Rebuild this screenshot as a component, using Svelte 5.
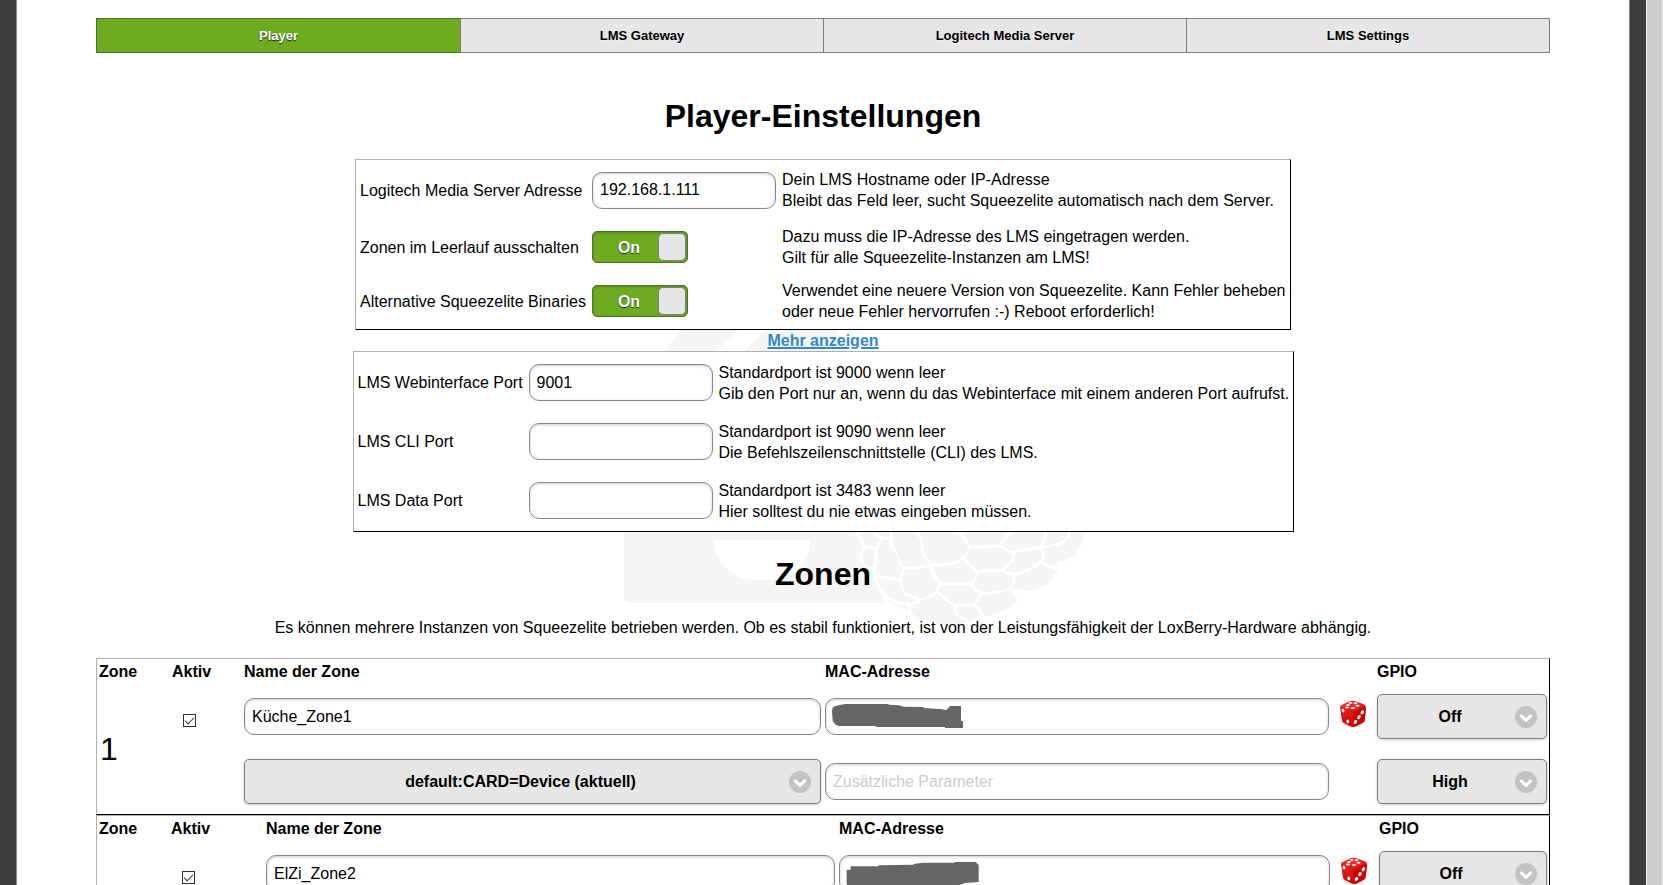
<script lang="ts">
	const tabs = ['Player', 'LMS Gateway', 'Logitech Media Server', 'LMS Settings'];
	let activeTab = $state('Player');

	let serverAddress = $state('192.168.1.111');
	let switchOffIdle = $state(true);
	let altBinaries = $state(true);

	let ports = $state([
		{
			id: 'web_port',
			label: 'LMS Webinterface Port',
			value: '9001',
			hint: ['Standardport ist 9000 wenn leer', 'Gib den Port nur an, wenn du das Webinterface mit einem anderen Port aufrufst.']
		},
		{
			id: 'cli_port',
			label: 'LMS CLI Port',
			value: '',
			hint: ['Standardport ist 9090 wenn leer', 'Die Befehlszeilenschnittstelle (CLI) des LMS.']
		},
		{
			id: 'data_port',
			label: 'LMS Data Port',
			value: '',
			hint: ['Standardport ist 3483 wenn leer', 'Hier solltest du nie etwas eingeben müssen.']
		}
	]);

	// cols: relative widths of the six table columns
	let zones = $state([
		{
			nr: 1,
			active: true,
			name: 'Küche_Zone1',
			cols: [73, 72, 581, 508, 44, 170],
			mask: '21,38 23,30 30,24 42,22 60,18 190,18 192,20 222,22 235,26 295,27 297,30 345,33 365,36 375,24 408,24 408,69 414,69 414,90 360,90 360,87 153,87 153,84 40,84 30,79 23,68'
		},
		{
			nr: 2,
			active: true,
			name: 'ElZi_Zone2',
			cols: [72, 95, 573, 495, 45, 168],
			mask: '23,44 35,44 35,34 119,34 119,31 224,29 224,27 252,23 347,23 347,21 410,21 419,30 419,81 378,84 362,90 300,96 23,96'
		}
	]);

	const colWidth = (cols: number[], i: number) =>
		(cols[i] / cols.reduce((a, b) => a + b, 0)) * 100;
</script>

<svelte:head>
	<title>Squeezelite Player</title>
</svelte:head>

{#snippet flip(id: string, checked: boolean, toggle: () => void)}
	<span class="flip" class:off={!checked}>
		<input type="checkbox" role="switch" {id} {checked} onchange={toggle} />
		<span class="flip-text">{checked ? 'On' : 'Off'}</span>
		<span class="flip-knob"></span>
	</span>
{/snippet}

{#snippet dropdown(label: string, options: string[])}
	<div class="dropdown">
		<select aria-label={label}>
			{#each options as option}
				<option>{option}</option>
			{/each}
		</select>
		<svg viewBox="0 0 22 22" aria-hidden="true">
			<circle cx="11" cy="11" r="11" fill="#c3c3c3" />
			<path d="M5.5 9 L11 14.3 L16.5 9" fill="none" stroke="#fff" stroke-width="3" />
		</svg>
	</div>
{/snippet}

<div class="shell">
	<div class="page">
		<!-- Watermark -->
		<svg class="watermark" viewBox="0 0 540 310" aria-hidden="true">
			<g fill="#f5f5f5">
				<path d="M129 0 H186 L164 21 H111 Z" />
				<path d="M191 21 L210 3 L214 0 H282 L300 21 Z" />
				<path d="M71 202 H330 V273 H79 Q71 273 71 265 Z" />
				<path d="M161 210 H257 C257 234 239 250 221 250 H202 C180 250 161 232 161 210 Z" fill="#fff" />
			</g>
			<g transform="translate(287 195) scale(0.3333)">
				<path
					fill="#f5f5f5"
					d="M45 20 H735 Q733 50 718 68 Q712 92 690 100 Q680 108 650 110 L655 135 Q640 150 632 170 Q600 195 560 197 L510 192 L532 226 Q505 255 480 262 Q450 276 425 271 L385 290 Q340 310 290 294 L255 285 Q220 275 212 262 L150 232 L108 155 L62 110 L72 75 Z"
				/>
				<g fill="none" stroke="#fff" stroke-width="8" stroke-linejoin="round" stroke-linecap="round">
					<path d="M45 20 Q70 40 72 70 Q58 95 65 110 Q75 130 108 130" />
					<path d="M100 18 Q112 40 130 38 Q104 60 108 100 Q100 130 106 155 Q112 195 140 215 Q170 240 208 236 Q205 255 215 268" />
					<path d="M72 70 Q90 62 104 70" />
					<path d="M148 18 Q160 34 152 46 Q155 70 172 88 Q176 115 190 125" />
					<path d="M130 38 L152 42" />
					<path d="M228 18 Q238 36 246 44 Q242 80 256 96 Q268 110 272 122 Q230 128 190 130" />
					<path d="M190 130 Q186 150 180 165 Q186 190 195 208 L242 224 Q218 238 208 240" />
					<path d="M108 155 Q140 158 180 165" />
					<path d="M272 122 Q278 150 300 175 Q294 190 290 200 Q270 218 242 224" />
					<path d="M272 118 Q320 122 350 112 Q385 88 388 68 Q382 40 350 18" />
					<path d="M388 65 Q430 70 475 62 L515 18" />
					<path d="M372 100 Q392 125 412 140 Q450 138 485 136 Q520 110 524 86 Q500 76 475 62" />
					<path d="M412 140 Q408 165 395 178 Q350 172 300 178" />
					<path d="M395 178 Q410 198 425 204 Q480 206 510 190 Q530 165 520 150 L485 136" />
					<path d="M524 80 Q570 72 598 68 Q620 45 615 18" />
					<path d="M598 68 Q620 90 605 105 Q590 130 520 150" />
					<path d="M598 68 Q650 62 672 50 Q690 30 690 18" />
					<path d="M605 110 Q625 128 655 128" />
					<path d="M425 204 Q410 230 400 240 Q365 240 345 242 Q315 222 290 200" />
					<path d="M345 242 Q340 265 360 275 L385 290" />
					<path d="M400 240 Q420 250 428 270" />
				</g>
			</g>
		</svg>

		<nav class="tabs">
			{#each tabs as tab}
				<a
					href="#{tab.replaceAll(' ', '-').toLowerCase()}"
					class:active={tab === activeTab}
					onclick={() => (activeTab = tab)}>{tab}</a
				>
			{/each}
		</nav>

		<h1>Player-Einstellungen</h1>

		<table class="panel main-panel">
			<tbody>
				<tr class="first">
					<td><label for="server">Logitech Media Server Adresse</label></td>
					<td><input type="text" id="server" bind:value={serverAddress} /></td>
					<td>Dein LMS Hostname oder IP-Adresse<br />Bleibt das Feld leer, sucht Squeezelite automatisch nach dem Server.</td>
				</tr>
				<tr>
					<td><label for="idle">Zonen im Leerlauf ausschalten</label></td>
					<td>{@render flip('idle', switchOffIdle, () => (switchOffIdle = !switchOffIdle))}</td>
					<td>Dazu muss die IP-Adresse des LMS eingetragen werden.<br />Gilt für alle Squeezelite-Instanzen am LMS!</td>
				</tr>
				<tr>
					<td><label for="binaries">Alternative Squeezelite Binaries</label></td>
					<td>{@render flip('binaries', altBinaries, () => (altBinaries = !altBinaries))}</td>
					<td>Verwendet eine neuere Version von Squeezelite. Kann Fehler beheben<br />oder neue Fehler hervorrufen :-) Reboot erforderlich!</td>
				</tr>
			</tbody>
		</table>

		<div class="more"><a href="#mehr">Mehr anzeigen</a></div>

		<table class="panel port-panel">
			<tbody>
				{#each ports as port}
					<tr>
						<td><label for={port.id}>{port.label}</label></td>
						<td><input type="text" id={port.id} bind:value={port.value} /></td>
						<td>{port.hint[0]}<br />{port.hint[1]}</td>
					</tr>
				{/each}
			</tbody>
		</table>

		<h1 class="zones-title">Zonen</h1>
		<p class="intro">
			Es können mehrere Instanzen von Squeezelite betrieben werden. Ob es stabil funktioniert, ist von der Leistungsfähigkeit der LoxBerry-Hardware abhängig.
		</p>

		{#each zones as zone}
			<table class="zone">
				<colgroup>
					{#each zone.cols as _, i}
						<col style="width: {colWidth(zone.cols, i)}%" />
					{/each}
				</colgroup>
				<thead>
					<tr>
						<th>Zone</th>
						<th>Aktiv</th>
						<th>Name der Zone</th>
						<th>MAC-Adresse</th>
						<td></td>
						<th>GPIO</th>
					</tr>
				</thead>
				<tbody>
					<tr>
						<td rowspan="2" class="zone-nr">{zone.nr}</td>
						<td class="zone-active">
							<input type="checkbox" aria-label="Zone {zone.nr} aktiv" bind:checked={zone.active} />
						</td>
						<td class="wide"><input type="text" aria-label="Name der Zone" bind:value={zone.name} /></td>
						<td class="wide">
							<div class="mac">
								<input type="text" aria-label="MAC-Adresse" />
								<svg viewBox="0 0 420 111" aria-hidden="true">
									<polygon points={zone.mask} fill="#666" />
								</svg>
							</div>
						</td>
						<td class="dice-cell">
							<button type="button" class="dice" aria-label="Zufällige MAC-Adresse">
								<svg viewBox="0 0 28 28" aria-hidden="true">
									<defs>
										<linearGradient id="top{zone.nr}" x1="0" y1="0" x2="1" y2="1">
											<stop offset="0" stop-color="#f03030" />
											<stop offset="1" stop-color="#e81818" />
										</linearGradient>
										<linearGradient id="left{zone.nr}" x1="0" y1="0" x2="0" y2="1">
											<stop offset="0" stop-color="#f22020" />
											<stop offset="1" stop-color="#c00808" />
										</linearGradient>
									</defs>
									<ellipse cx="14" cy="25" rx="9" ry="2" fill="#000" opacity="0.15" />
									<path d="M3 5 Q1 5 1.3 8 L3 20 Q3.3 22 5 23 L12 26.5 Q14 27.5 16 26.5 L23.5 23 Q25.5 22 25.7 20 L27 8 Q27 5 25 4.5 L15 1 Q12.5 0.5 10 1.5 Z" fill="#d80c0c" />
									<path d="M2 6 L11 1.3 Q13 0.5 16 1.3 L25 4.5 Q26 5.5 24 6.3 L15 11 Q13 11.7 11 10.8 L3 7.5 Z" fill="url(#top{zone.nr})" />
									<path d="M1.3 7 L11 11 Q13 12 13 14 L13.5 26.8 L5 23 Q3.3 22 3 20 Z" fill="url(#left{zone.nr})" />
									<path d="M27 7 L16 11.7 Q13.5 13 13.3 15 L13.5 26.8 Q15 27 16 26.5 L23.5 23 Q25.5 22 25.7 20 Z" fill="#c80606" />
									<g fill="#fff">
										<ellipse cx="11.5" cy="2.8" rx="2" ry="1" />
										<ellipse cx="16.5" cy="3.3" rx="2" ry="1" />
										<ellipse cx="9" cy="4.9" rx="2" ry="1" />
										<ellipse cx="18.5" cy="5.7" rx="2" ry="1" />
										<ellipse cx="8" cy="7.4" rx="2" ry="1" />
										<ellipse cx="14" cy="7.9" rx="2" ry="1" />
										<ellipse cx="4" cy="10.5" rx="1.4" ry="1.9" transform="rotate(-15 4 10.5)" />
										<ellipse cx="8.7" cy="21.5" rx="1.4" ry="1.9" transform="rotate(-15 8.7 21.5)" />
										<ellipse cx="23.3" cy="12.3" rx="1.5" ry="2.2" transform="rotate(35 23.3 12.3)" />
										<ellipse cx="20" cy="17.2" rx="1.5" ry="2.2" transform="rotate(35 20 17.2)" />
										<ellipse cx="16.4" cy="22" rx="1.5" ry="2.2" transform="rotate(35 16.4 22)" />
									</g>
								</svg>
							</button>
						</td>
						<td>{@render dropdown('GPIO', ['Off', 'On'])}</td>
					</tr>
					<tr>
						<td></td>
						<td class="wide">{@render dropdown('Ausgabegerät', ['default:CARD=Device (aktuell)'])}</td>
						<td class="wide"><input type="text" aria-label="Zusätzliche Parameter" placeholder="Zusätzliche Parameter" /></td>
						<td></td>
						<td>{@render dropdown('GPIO Pegel', ['High', 'Low'])}</td>
					</tr>
				</tbody>
			</table>
		{/each}
	</div>
	<div class="scrollbar"></div>
</div>

<style>
	:global(body) {
		background: #3c3c3c;
	}

	.shell {
		display: flex;
		height: 100vh;
		overflow: hidden;
		color: #000;
		font-family: 'Liberation Sans', Arial, Helvetica, sans-serif;
		font-size: 16px;
		line-height: 21px;
	}

	.page {
		position: relative;
		flex: 1;
		min-width: 0;
		min-height: 100%;
		height: max-content;
		box-sizing: border-box;
		margin: 0 16px;
		padding: 18px 79px 40px;
		background: #fff;
		border: solid #888;
		border-width: 0 1px;
	}

	.page > :not(.watermark) {
		position: relative;
	}

	.scrollbar {
		width: 15px;
		background: #cdcdcd;
		border: solid #f0f0f0;
		border-width: 0 1px;
	}

	.watermark {
		position: absolute;
		top: 330px;
		left: 0;
		right: 0;
		width: 540px;
		height: 310px;
		margin: 0 auto;
	}

	/* Navigation */
	.tabs {
		display: grid;
		grid-template-columns: repeat(4, 1fr);
		border: 1px solid #7e7e7e;
	}

	.tabs a {
		padding: 6px 0;
		background: #e6e6e6;
		border-left: 1px solid #7e7e7e;
		color: #000;
		font-size: 13px;
		font-weight: 700;
		text-align: center;
		text-decoration: none;
		text-shadow: 0 1px 0 #eee;
	}

	.tabs a:first-child {
		border-left: none;
	}

	.tabs a.active {
		margin: -1px 0 -1px -1px;
		background: #6dab20;
		border: 1px solid #4d7320;
		border-right: none;
		color: #fff;
		text-shadow: 0 1px 1px #222;
	}

	h1 {
		margin: 44px 0 24px;
		font-size: 32px;
		line-height: 38px;
		text-align: center;
	}

	h1.zones-title {
		margin-top: 23px;
	}

	.intro {
		margin: 0 0 20px;
		text-align: center;
	}

	/* Settings panels */
	.panel,
	.zone {
		background: #fff;
		border: 1px solid;
		border-color: #b0b0b0 #000 #000 #b0b0b0;
		border-spacing: 0;
	}

	.panel {
		margin: 0 auto;
		padding: 0 2px 1px;
		white-space: nowrap;
	}

	.panel td {
		height: 54px;
		padding: 0;
	}

	.panel .first td {
		height: 60px;
	}

	.panel td:first-child {
		box-sizing: border-box;
		padding-left: 2px;
	}

	.panel td:nth-child(2) {
		width: 190px;
	}

	.main-panel td:first-child {
		width: 234px;
	}

	.main-panel td:last-child {
		width: 506px;
	}

	.port-panel {
		padding: 1px 2px;
	}

	.port-panel td {
		height: 59px;
	}

	.port-panel td:first-child {
		width: 173px;
	}

	.port-panel td:last-child {
		width: 572px;
	}

	.panel input[type='text'] {
		width: 184px;
	}

	input[type='text'] {
		display: block;
		box-sizing: border-box;
		width: 100%;
		height: 37px;
		padding: 0 7px;
		background: #fff;
		border: 1px solid #888;
		border-radius: 10px;
		box-shadow: inset 0 1px 3px rgba(0, 0, 0, 0.2);
		color: #000;
		font: inherit;
	}

	input[type='text']::placeholder {
		color: #ccc;
	}

	.more {
		height: 21px;
		text-align: center;
	}

	.more a {
		color: #38c;
		font-weight: 700;
		text-decoration-thickness: 2px;
	}

	/* Flip switch */
	.flip {
		position: relative;
		display: flex;
		align-items: center;
		box-sizing: border-box;
		width: 96px;
		height: 32px;
		padding: 1px;
		background: #6dab20;
		border: 1px solid #4d7320;
		border-radius: 5px;
		box-shadow: inset 0 1px 3px rgba(0, 0, 0, 0.2);
		color: #fff;
		font-weight: 700;
		text-shadow: 0 1px 1px #222;
	}

	.flip input {
		position: absolute;
		inset: 0;
		width: 100%;
		height: 100%;
		margin: 0;
		opacity: 0;
		cursor: pointer;
	}

	.flip-text {
		flex: 1;
		padding-left: 6px;
		text-align: center;
	}

	.flip-knob {
		box-sizing: border-box;
		width: 28px;
		height: 28px;
		background: #e6e6e6;
		border: 1px solid #7e7e7e;
		border-radius: 5px;
	}

	.flip.off {
		flex-direction: row-reverse;
		background: #ddd;
		border-color: #888;
		color: #000;
		text-shadow: none;
	}

	/* Zones */
	.zone {
		width: 100%;
		padding: 0 2px;
		table-layout: fixed;
	}

	.zone th,
	.zone td {
		height: 65px;
		padding: 0;
		text-align: left;
	}

	.zone thead th,
	.zone thead td {
		height: 25px;
	}

	.zone .wide {
		padding-right: 4px;
	}

	.zone .zone-nr {
		padding-left: 1px;
		font-size: 32px;
	}

	.zone .zone-active {
		padding: 8px 0 0 11px;
		box-sizing: border-box;
	}

	.zone-active input {
		display: block;
		position: relative;
		appearance: none;
		box-sizing: border-box;
		width: 13px;
		height: 13px;
		margin: 0;
		background: #fff;
		border: 1px solid #333;
	}

	.zone-active input:checked::before {
		content: '';
		position: absolute;
		top: 2px;
		left: 1px;
		width: 8px;
		height: 4px;
		border: solid #333;
		border-width: 0 0 1px 1px;
		transform: rotate(-45deg);
	}

	.mac {
		position: relative;
	}

	.mac svg {
		position: absolute;
		top: 0;
		left: 0;
		width: 140px;
		height: 37px;
	}

	.zone .dice-cell {
		padding-bottom: 6px;
		box-sizing: border-box;
	}

	.dice {
		display: block;
		width: 28px;
		height: 28px;
		margin: 0 0 0 6px;
		padding: 0;
		background: none;
		border: none;
		cursor: pointer;
	}

	.dice svg {
		display: block;
		width: 28px;
		height: 28px;
	}

	.dropdown {
		position: relative;
	}

	.dropdown select {
		display: block;
		appearance: none;
		box-sizing: border-box;
		width: 100%;
		height: 45px;
		padding: 0 40px 0 16px;
		background: #e6e6e6;
		border: 1px solid #7e7e7e;
		border-radius: 5px;
		box-shadow: 0 1px 3px rgba(0, 0, 0, 0.2);
		color: #000;
		font: inherit;
		font-weight: 700;
		text-align: center;
		text-align-last: center;
		cursor: pointer;
	}

	.dropdown svg {
		position: absolute;
		top: 12px;
		right: 10px;
		width: 22px;
		height: 22px;
		pointer-events: none;
	}
</style>
